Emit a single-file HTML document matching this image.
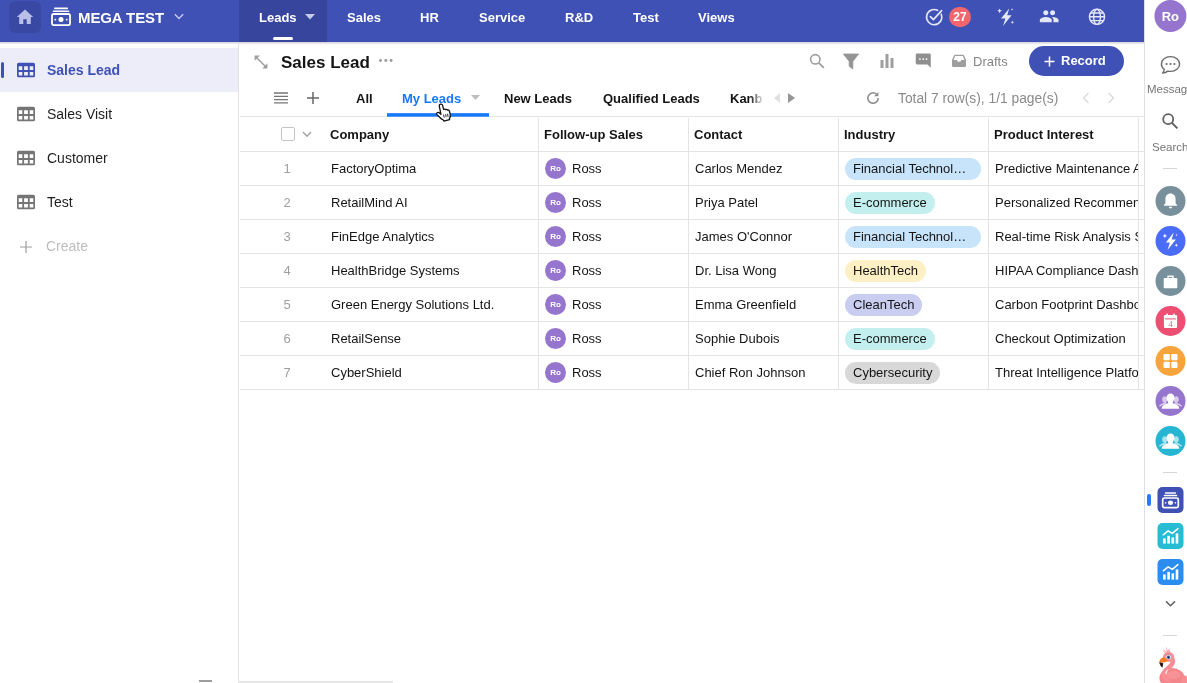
<!DOCTYPE html>
<html lang="en">
<head>
<meta charset="utf-8">
<title>Sales Lead - MEGA TEST</title>
<style>
*{box-sizing:border-box;margin:0;padding:0}
html,body{width:1187px;height:683px;overflow:hidden;background:#fff}
body{font-family:"Liberation Sans",sans-serif;font-size:13px;color:#151515;position:relative}
#app{position:absolute;left:0;top:0;width:1187px;height:683px;will-change:transform}
.abs{position:absolute}
svg{display:block}

/* top header */
#hdr{position:absolute;left:0;top:0;width:1144px;height:42px;background:#3f51b5}
#hdrshadow{position:absolute;left:0;top:42px;width:1144px;height:3px;background:linear-gradient(#d0d1d8,#ebebee 55%,rgba(255,255,255,0))}
#home{position:absolute;left:9px;top:1px;width:32px;height:32px;border-radius:6px;background:#3949a3}
#appname{position:absolute;left:78px;top:9px;font-size:15px;font-weight:bold;color:#fff;line-height:18px;white-space:nowrap;letter-spacing:-0.1px}
#tabact{position:absolute;left:239px;top:0;width:88px;height:42px;background:#37459d}
.nt{position:absolute;top:10px;font-size:13px;font-weight:bold;color:#fff;line-height:16px;white-space:nowrap}
#ntbar{position:absolute;left:273px;top:37px;width:20px;height:3px;border-radius:2px;background:#fff}
#badge{position:absolute;left:949px;top:7px;width:22px;height:20px;border-radius:10px;background:#f1666d;color:#fff;font-size:12px;font-weight:bold;line-height:20px;text-align:center}

/* left sidebar */
#side{position:absolute;left:0;top:44px;width:239px;height:639px;background:#fff;border-right:1px solid #e3e3e3}
#sel{position:absolute;left:0;top:48px;width:238px;height:44px;background:#ecedf8}
#selbar{position:absolute;left:1px;top:62px;width:3px;height:16px;border-radius:2px;background:#3f51b5}
.si{position:absolute;left:47px;font-size:14px;line-height:18px;color:#1f1f1f;white-space:nowrap}
.gi{position:absolute;left:17px}

/* main */
#title{position:absolute;left:281px;top:52px;font-size:17px;font-weight:bold;line-height:22px;color:#151515;white-space:nowrap}
.vt{position:absolute;top:91px;font-size:13px;font-weight:bold;line-height:16px;color:#151515;white-space:nowrap}
#vtbar{position:absolute;left:387px;top:113px;width:102px;height:4px;background:linear-gradient(to bottom,rgba(22,119,255,.85) 0,rgba(22,119,255,.85) 1px,#1677ff 1px,#1677ff 3px,rgba(22,119,255,.7) 3px,rgba(22,119,255,.7) 4px);z-index:2}
#drafts{position:absolute;left:973px;top:54px;font-size:13px;line-height:16px;color:#858585}
#rec{position:absolute;left:1029px;top:46px;width:95px;height:30px;border-radius:15px;background:#3f51b5;color:#fff;font-size:13px;font-weight:bold;line-height:30px}
#total{position:absolute;left:898px;top:91px;font-size:13.800px;line-height:16px;color:#8a8a8a;white-space:nowrap}

/* table */
#tbl{position:absolute;left:239px;top:117px;width:905px;height:273px}
.hl{position:absolute;left:1px;width:904px;height:1px;background:#e4e4e4}
.vl{position:absolute;top:1px;width:1px;height:271px;background:#e4e4e4}
.th{position:absolute;top:10px;font-size:13px;font-weight:bold;line-height:16px;color:#151515;white-space:nowrap}
.row{position:absolute;left:0;width:905px;height:34px}
.c{position:absolute;top:10px;line-height:16px;font-size:13px;color:#151515;white-space:nowrap}
.n{left:43px;width:10px;text-align:center;color:#9e9e9e}
.co{left:92px}
.av{position:absolute;left:306px;top:7px;width:21px;height:21px;border-radius:11px;background:#9575cd;color:#fff;font-size:8px;font-weight:bold;line-height:21px;text-align:center}
.ro{left:333px}
.ct{left:456px}
.tag{position:absolute;left:606px;top:7px;height:22px;border-radius:11px;padding:0 8px;line-height:22px;font-size:13px;color:#151515;white-space:nowrap}
.pi{left:756px;width:143px;overflow:hidden}

/* right rail */
#rail{position:absolute;left:1144px;top:0;width:43px;height:683px;background:#fff;border-left:1px solid #e0e0e0}
.rl{position:absolute;font-size:11.5px;color:#757575;line-height:14px;white-space:nowrap}
.rc{position:absolute;left:1155px;transform:translateX(0.5px);width:30px;height:30px;border-radius:15px;overflow:hidden}
.rs{position:absolute;left:1158px;transform:translateX(-0.5px);width:26px;height:26px;border-radius:5px;overflow:hidden}
.sep{position:absolute;left:1163px;width:14px;height:1px;background:#d6d6d6}
</style>
</head>
<body>
<div id="app">

<!-- ===== header ===== -->
<div id="hdr"></div>
<div id="hdrshadow"></div>
<div id="home"><svg width="32" height="32" viewBox="0 0 32 32"><path d="M16 8.600 L7.800 16 H10.200 V23 H14.300 V18.200 H17.700 V23 H21.800 V16 H24.200 Z" fill="#b9bfe6"/></svg></div>
<svg class="abs" style="left:51px;top:7px" width="20" height="20" viewBox="0 0 20 20"><rect x="3" y="0.6" width="14" height="1.6" rx=".8" fill="#fff"/><rect x="1.6" y="3.4" width="16.8" height="1.7" rx=".8" fill="#fff"/><rect x="1" y="7" width="18" height="11.2" rx="1.6" fill="none" stroke="#fff" stroke-width="1.8"/><circle cx="10" cy="12.6" r="2.5" fill="#fff"/><rect x="3.5" y="11.8" width="1.6" height="1.6" fill="#fff"/><rect x="14.9" y="11.8" width="1.6" height="1.6" fill="#fff"/></svg>
<div id="appname">MEGA TEST</div>
<svg class="abs" style="left:173px;top:12px" width="12" height="9" viewBox="0 0 12 9"><path d="M1.8 2.2 L6 6.4 L10.2 2.2" fill="none" stroke="#c5cbec" stroke-width="1.4"/></svg>

<div id="tabact"></div>
<div class="nt" style="left:259px">Leads</div>
<svg class="abs" style="left:305px;top:14px" width="10" height="6" viewBox="0 0 10 6"><path d="M0 0 H10 L5 5.4 Z" fill="#c5cbec"/></svg>
<div id="ntbar"></div>
<div class="nt" style="left:347px">Sales</div>
<div class="nt" style="left:420px">HR</div>
<div class="nt" style="left:479px">Service</div>
<div class="nt" style="left:565px">R&amp;D</div>
<div class="nt" style="left:633px">Test</div>
<div class="nt" style="left:698px">Views</div>

<!-- header right icons -->
<svg class="abs" style="left:924px;top:7px" width="20" height="20" viewBox="0 0 20 20"><path d="M17.2 7.2 A7.6 7.6 0 1 1 13.6 3.3" fill="none" stroke="#e4e7f7" stroke-width="1.6" stroke-linecap="round"/><path d="M6.4 9.6 L9.4 12.6 L17.6 3.6" fill="none" stroke="#e4e7f7" stroke-width="1.7" stroke-linecap="round" stroke-linejoin="round"/></svg>
<div id="badge">27</div>
<svg class="abs" style="left:995px;top:6px" width="22" height="22" viewBox="0 0 22 22"><path d="M14.200 2.400 L6 12.400 H10.400 L8 20 L16.600 9.200 H12.200 Z" fill="#e4e7f7"/><path d="M4.6 2.4 l.7 1.7 1.7.7 -1.7.7 -.7 1.7 -.7-1.7 -1.7-.7 1.7-.7z" fill="#e4e7f7"/><path d="M17.4 14.6 l.5 1.2 1.2.5 -1.2.5 -.5 1.2 -.5-1.2 -1.2-.5 1.2-.5z" fill="#e4e7f7"/><path d="M17 2.2 l.35.85.85.35-.85.35-.35.85-.35-.85-.85-.35.85-.35z" fill="#e4e7f7"/></svg>
<svg class="abs" style="left:1038.800px;top:6px" width="20.400" height="20.400" viewBox="0 0 24 24"><path d="M16 11c1.66 0 2.99-1.34 2.99-3S17.660 5 16 5c-1.660 0-3 1.340-3 3s1.340 3 3 3zm-8 0c1.660 0 2.990-1.340 2.990-3S9.660 5 8 5C6.340 5 5 6.340 5 8s1.340 3 3 3zm0 2c-2.330 0-7 1.170-7 3.500V19h14v-2.500c0-2.330-4.670-3.500-7-3.500zm8 0c-.290 0-.620.020-.970.050 1.160.840 1.970 1.970 1.970 3.450V19h6v-2.500c0-2.330-4.670-3.500-7-3.500z" fill="#e4e7f7"/></svg>
<svg class="abs" style="left:1087px;top:7px" width="20" height="20" viewBox="0 0 20 20"><g fill="none" stroke="#e4e7f7" stroke-width="1.400"><circle cx="10" cy="9.800" r="7.600"/><ellipse cx="10" cy="9.800" rx="3.400" ry="7.600"/><path d="M2.400 9.800 H17.600 M3.400 6 H16.600 M3.400 13.600 H16.600"/></g></svg>

<!-- ===== left sidebar ===== -->
<div id="side"></div>
<div id="sel"></div>
<div id="selbar"></div>
<svg class="gi" style="top:62px" width="18" height="16" viewBox="0 0 18 16"><path fill="#3f51b5" fill-rule="evenodd" d="M1.600 0.700 H16.400 A1.600 1.600 0 0 1 18 2.300 V13.700 A1.600 1.600 0 0 1 16.400 15.300 H1.600 A1.600 1.600 0 0 1 0 13.700 V2.300 A1.600 1.600 0 0 1 1.600 0.700 Z M1.700 4.300 V7.900 H5.300 V4.300 Z M7.100 4.300 V7.900 H10.900 V4.300 Z M12.700 4.300 V7.900 H16.300 V4.300 Z M1.700 9.900 V13.500 H5.300 V9.900 Z M7.100 9.900 V13.500 H10.900 V9.900 Z M12.700 9.900 V13.500 H16.300 V9.900 Z"/></svg>
<div class="si" style="top:61px;font-weight:bold;color:#3f51b5">Sales Lead</div>
<svg class="gi" style="top:106px" width="18" height="16" viewBox="0 0 18 16"><path fill="#757575" fill-rule="evenodd" d="M1.600 0.700 H16.400 A1.600 1.600 0 0 1 18 2.300 V13.700 A1.600 1.600 0 0 1 16.400 15.300 H1.600 A1.600 1.600 0 0 1 0 13.700 V2.300 A1.600 1.600 0 0 1 1.600 0.700 Z M1.700 4.300 V7.900 H5.300 V4.300 Z M7.100 4.300 V7.900 H10.900 V4.300 Z M12.700 4.300 V7.900 H16.300 V4.300 Z M1.700 9.900 V13.500 H5.300 V9.900 Z M7.100 9.900 V13.500 H10.900 V9.900 Z M12.700 9.900 V13.500 H16.300 V9.900 Z"/></svg>
<div class="si" style="top:105px">Sales Visit</div>
<svg class="gi" style="top:150px" width="18" height="16" viewBox="0 0 18 16"><path fill="#757575" fill-rule="evenodd" d="M1.600 0.700 H16.400 A1.600 1.600 0 0 1 18 2.300 V13.700 A1.600 1.600 0 0 1 16.400 15.300 H1.600 A1.600 1.600 0 0 1 0 13.700 V2.300 A1.600 1.600 0 0 1 1.600 0.700 Z M1.700 4.300 V7.900 H5.300 V4.300 Z M7.100 4.300 V7.900 H10.900 V4.300 Z M12.700 4.300 V7.900 H16.300 V4.300 Z M1.700 9.900 V13.500 H5.300 V9.900 Z M7.100 9.900 V13.500 H10.900 V9.900 Z M12.700 9.900 V13.500 H16.300 V9.900 Z"/></svg>
<div class="si" style="top:149px">Customer</div>
<svg class="gi" style="top:194px" width="18" height="16" viewBox="0 0 18 16"><path fill="#757575" fill-rule="evenodd" d="M1.600 0.700 H16.400 A1.600 1.600 0 0 1 18 2.300 V13.700 A1.600 1.600 0 0 1 16.400 15.300 H1.600 A1.600 1.600 0 0 1 0 13.700 V2.300 A1.600 1.600 0 0 1 1.600 0.700 Z M1.700 4.300 V7.900 H5.300 V4.300 Z M7.100 4.300 V7.900 H10.900 V4.300 Z M12.700 4.300 V7.900 H16.300 V4.300 Z M1.700 9.900 V13.500 H5.300 V9.900 Z M7.100 9.900 V13.500 H10.900 V9.900 Z M12.700 9.900 V13.500 H16.300 V9.900 Z"/></svg>
<div class="si" style="top:193px">Test</div>
<svg class="abs" style="left:19px;top:240px" width="14" height="14" viewBox="0 0 14 14"><path d="M7 1 V13 M1 7 H13" stroke="#9e9e9e" stroke-width="1.2" fill="none"/></svg>
<div class="si" style="top:237px;left:46px;color:#bdbdbd">Create</div>

<!-- ===== title row ===== -->
<svg class="abs" style="left:254px;top:55px" width="14" height="14" viewBox="0 0 14 14"><path d="M2.500 2.500 L11.500 11.500" fill="none" stroke="#9e9e9e" stroke-width="1.500"/><path d="M0.600 0.600 H5.800 L0.600 5.800 Z M13.400 13.400 H8.200 L13.400 8.200 Z" fill="#9e9e9e"/></svg>
<div id="title">Sales Lead</div>
<svg class="abs" style="left:378px;top:58px" width="16" height="5" viewBox="0 0 16 5"><circle cx="2.500" cy="2.500" r="1.450" fill="#9a9a9a"/><circle cx="7.800" cy="2.500" r="1.450" fill="#9a9a9a"/><circle cx="13.100" cy="2.500" r="1.450" fill="#9a9a9a"/></svg>

<svg class="abs" style="left:808px;top:52px" width="18" height="18" viewBox="0 0 18 18"><circle cx="7.300" cy="7.300" r="4.700" fill="none" stroke="#9e9e9e" stroke-width="1.600"/><path d="M10.800 10.800 L15.800 15.800" stroke="#9e9e9e" stroke-width="1.800" fill="none"/></svg>
<svg class="abs" style="left:842px;top:53px" width="18" height="17" viewBox="0 0 18 17"><path d="M1.400 1 H16.600 L10.800 8.400 V16 L7.200 13.200 V8.400 Z" fill="#949494" stroke="#949494" stroke-width=".8" stroke-linejoin="round"/></svg>
<svg class="abs" style="left:879px;top:53px" width="16" height="16" viewBox="0 0 16 16"><rect x="1.500" y="7" width="3" height="8" fill="#9e9e9e"/><rect x="6.500" y="1" width="3" height="14" fill="#9e9e9e"/><rect x="11.500" y="5" width="3" height="10" fill="#9e9e9e"/></svg>
<svg class="abs" style="left:915px;top:53px" width="16.500" height="15.600" viewBox="0 0 18 17"><path d="M2.400 0.500 H15.600 A1.600 1.600 0 0 1 17.200 2.100 V16.200 L13.600 12.600 H2.400 A1.600 1.600 0 0 1 0.800 11 V2.100 A1.600 1.600 0 0 1 2.400 0.500 Z" fill="#8f8f8f"/><circle cx="5.400" cy="6.600" r="1" fill="#fff"/><circle cx="9" cy="6.600" r="1" fill="#fff"/><circle cx="12.600" cy="6.600" r="1" fill="#fff"/></svg>
<svg class="abs" style="left:951px;top:54px" width="16" height="14" viewBox="0 0 16 14"><path d="M3.400 0.700 H12.600 L15 5.800 V11.800 A1.100 1.100 0 0 1 13.900 12.900 H2.100 A1.100 1.100 0 0 1 1 11.800 V5.800 Z M4.200 2.100 L2.600 6 H5.700 A2.350 2.350 0 0 0 10.300 6 H13.400 L11.800 2.100 Z" fill="#9e9e9e" fill-rule="evenodd"/></svg>
<div id="drafts">Drafts</div>
<div id="rec"><svg class="abs" style="left:15px;top:9.500px" width="11" height="11" viewBox="0 0 11 11"><path d="M5.500 0.500 V10.500 M0.500 5.500 H10.500" stroke="#fff" stroke-width="1.500" fill="none"/></svg><span class="abs" style="left:32px;top:0">Record</span></div>

<!-- ===== view tabs row ===== -->
<svg class="abs" style="left:274px;top:92px" width="14" height="12" viewBox="0 0 14 12"><path d="M0 1 H14 M0 4.300 H14 M0 7.600 H14 M0 10.900 H14" stroke="#757575" stroke-width="1.300" fill="none"/></svg>
<svg class="abs" style="left:306px;top:91px" width="14" height="14" viewBox="0 0 14 14"><path d="M7 1 V13 M1 7 H13" stroke="#666" stroke-width="1.500" fill="none"/></svg>
<div class="vt" style="left:356px">All</div>
<div class="vt" style="left:402px;color:#1677ff">My Leads</div>
<svg class="abs" style="left:471px;top:95px" width="9" height="5" viewBox="0 0 9 5"><path d="M0 0 H9 L4.500 5 Z" fill="#bdbdbd"/></svg>
<div id="vtbar"></div>
<div class="vt" style="left:504px">New Leads</div>
<div class="vt" style="left:603px">Qualified Leads</div>
<div class="vt" style="left:730px;width:33px;overflow:hidden">Kanban</div>
<div class="abs" style="left:750px;top:88px;width:14px;height:20px;background:linear-gradient(90deg,rgba(255,255,255,0),#fff)"></div>
<svg class="abs" style="left:774px;top:93px" width="6" height="10" viewBox="0 0 6 10"><path d="M6 0 V10 L0 5 Z" fill="#e0e0e0"/></svg>
<svg class="abs" style="left:788px;top:93px" width="7" height="10" viewBox="0 0 7 10"><path d="M0 0 V10 L7 5 Z" fill="#969696"/></svg>
<svg class="abs" style="left:865px;top:90px" width="16" height="16" viewBox="0 0 16 16"><path d="M13.200 8 A5.200 5.200 0 1 1 11.600 4.300" fill="none" stroke="#8a8a8a" stroke-width="1.500"/><path d="M13.400 2 V6.200 H9.200 Z" fill="#8a8a8a"/></svg>
<div id="total">Total 7 row(s), 1/1 page(s)</div>
<svg class="abs" style="left:1082px;top:92px" width="8" height="12" viewBox="0 0 8 12"><path d="M6.500 1 L1.500 6 L6.500 11" fill="none" stroke="#d9d9d9" stroke-width="1.300"/></svg>
<svg class="abs" style="left:1107px;top:92px" width="8" height="12" viewBox="0 0 8 12"><path d="M1.500 1 L6.500 6 L1.500 11" fill="none" stroke="#d9d9d9" stroke-width="1.300"/></svg>

<!-- ===== table ===== -->
<div id="tbl">
  <div class="hl" style="top:-1px"></div>
  <div class="hl" style="top:34px"></div>
  <div class="hl" style="top:68px"></div>
  <div class="hl" style="top:102px"></div>
  <div class="hl" style="top:136px"></div>
  <div class="hl" style="top:170px"></div>
  <div class="hl" style="top:204px"></div>
  <div class="hl" style="top:238px"></div>
  <div class="hl" style="top:272px"></div>
  <div class="vl" style="left:299px"></div>
  <div class="vl" style="left:449px"></div>
  <div class="vl" style="left:599px"></div>
  <div class="vl" style="left:749px"></div>
  <div class="vl" style="left:899px"></div>

  <div class="abs" style="left:42px;top:10px;width:14px;height:14px;border:1px solid #c4c4c4;border-radius:2px;background:#fff"></div>
  <svg class="abs" style="left:63px;top:14px" width="10" height="7" viewBox="0 0 10 7"><path d="M1 1 L5 5.200 L9 1" fill="none" stroke="#9e9e9e" stroke-width="1.300"/></svg>
  <div class="th" style="left:91px">Company</div>
  <div class="th" style="left:305px">Follow-up Sales</div>
  <div class="th" style="left:455px">Contact</div>
  <div class="th" style="left:605px">Industry</div>
  <div class="th" style="left:755px">Product Interest</div>

  <div class="row" style="top:34px"><div class="c n">1</div><div class="c co">FactoryOptima</div><div class="av">Ro</div><div class="c ro">Ross</div><div class="c ct">Carlos Mendez</div><div class="tag" style="background:#c8e4fb;width:136px">Financial Technol…</div><div class="c pi">Predictive Maintenance Analytics</div></div>
  <div class="row" style="top:68px"><div class="c n">2</div><div class="c co">RetailMind AI</div><div class="av">Ro</div><div class="c ro">Ross</div><div class="c ct">Priya Patel</div><div class="tag" style="background:#c3f0ee">E-commerce</div><div class="c pi">Personalized Recommendation</div></div>
  <div class="row" style="top:102px"><div class="c n">3</div><div class="c co">FinEdge Analytics</div><div class="av">Ro</div><div class="c ro">Ross</div><div class="c ct">James O'Connor</div><div class="tag" style="background:#c8e4fb;width:136px">Financial Technol…</div><div class="c pi">Real-time Risk Analysis Suite</div></div>
  <div class="row" style="top:136px"><div class="c n">4</div><div class="c co">HealthBridge Systems</div><div class="av">Ro</div><div class="c ro">Ross</div><div class="c ct">Dr. Lisa Wong</div><div class="tag" style="background:#fdf0c4">HealthTech</div><div class="c pi">HIPAA Compliance Dashboard</div></div>
  <div class="row" style="top:170px"><div class="c n">5</div><div class="c co">Green Energy Solutions Ltd.</div><div class="av">Ro</div><div class="c ro">Ross</div><div class="c ct">Emma Greenfield</div><div class="tag" style="background:#c9cdf0">CleanTech</div><div class="c pi">Carbon Footprint Dashboard</div></div>
  <div class="row" style="top:204px"><div class="c n">6</div><div class="c co">RetailSense</div><div class="av">Ro</div><div class="c ro">Ross</div><div class="c ct">Sophie Dubois</div><div class="tag" style="background:#c3f0ee">E-commerce</div><div class="c pi">Checkout Optimization</div></div>
  <div class="row" style="top:238px"><div class="c n">7</div><div class="c co">CyberShield</div><div class="av">Ro</div><div class="c ro">Ross</div><div class="c ct">Chief Ron Johnson</div><div class="tag" style="background:#d8d8d8">Cybersecurity</div><div class="c pi">Threat Intelligence Platform</div></div>
</div>

<!-- ===== right rail ===== -->
<div id="rail"></div>
<div class="abs" style="left:1155px;top:0;width:32px;height:32px;border-radius:16px;transform:translateX(-0.600px);background:#9575cd;color:#fff;font-size:13px;font-weight:bold;line-height:33px;text-align:center">Ro</div>

<svg class="abs" style="left:1160px;top:55px" width="21" height="20" viewBox="0 0 21 20"><path d="M10.500 1.600 C5.400 1.600 1.400 4.900 1.400 9 C1.400 11.100 2.500 13 4.300 14.300 C4.200 15.700 3.600 17 2.600 18 C4.700 17.900 6.500 17.200 7.800 16.100 C8.700 16.300 9.600 16.400 10.500 16.400 C15.600 16.400 19.600 13.100 19.600 9 C19.600 4.900 15.600 1.600 10.500 1.600 Z" fill="none" stroke="#6b6b6b" stroke-width="1.400" stroke-linejoin="round"/><circle cx="6.600" cy="9" r="1.100" fill="#6b6b6b"/><circle cx="10.500" cy="9" r="1.100" fill="#6b6b6b"/><circle cx="14.400" cy="9" r="1.100" fill="#6b6b6b"/></svg>
<div class="rl" style="left:1147px;top:82px">Message</div>
<svg class="abs" style="left:1161px;top:112px" width="18" height="18" viewBox="0 0 18 18"><circle cx="7.200" cy="7.200" r="5" fill="none" stroke="#616161" stroke-width="1.800"/><path d="M10.900 10.900 L16.400 16.400" stroke="#616161" stroke-width="2" fill="none"/></svg>
<div class="rl" style="left:1152px;top:140px">Search</div>
<div class="sep" style="top:168px"></div>

<!-- bell -->
<div class="rc" style="top:186px;background:#78909c"><svg width="30" height="30" viewBox="0 0 30 30"><path d="M15 7.600 C11.900 7.600 9.900 10 9.900 13 V17.200 L8.400 19 V19.800 H21.600 V19 L20.100 17.200 V13 C20.100 10 18.100 7.600 15 7.600 Z" fill="#fff"/><path d="M13.300 20.800 H16.700 A1.700 1.700 0 0 1 13.300 20.800 Z" fill="#fff"/></svg></div>
<!-- spark -->
<div class="rc" style="top:226px;background:#4a6cf7"><svg width="30" height="30" viewBox="0 0 30 30"><path d="M18.200 6.400 L10.400 16.400 H14.400 L12 24 L20.400 13.400 H16.200 Z" fill="#fff"/><path d="M9.400 7.600 l.7 1.600 1.600.7 -1.600.7 -.7 1.600 -.7-1.600 -1.600-.7 1.600-.7z" fill="#fff"/><path d="M20.800 17.400 l.55 1.250 1.250.55 -1.250.55 -.55 1.250 -.55-1.250 -1.250-.55 1.250-.55z" fill="#fff"/><path d="M21.200 7.800 l.35.850.85.350-.85.350-.35.850-.35-.850-.85-.350.85-.350z" fill="#fff"/></svg></div>
<!-- briefcase -->
<div class="rc" style="top:266px;background:#78909c"><svg width="30" height="30" viewBox="0 0 30 30"><path d="M12.600 12 V10.200 H17.400 V12" fill="none" stroke="#fff" stroke-width="1.500"/><rect x="8.200" y="12" width="13.600" height="10.200" rx="1" fill="#fff"/></svg></div>
<!-- calendar -->
<div class="rc" style="top:306px;background:#ec4f72"><svg width="30" height="30" viewBox="0 0 30 30"><rect x="8.400" y="9" width="13.200" height="13" rx="1.200" fill="#fff"/><rect x="10.800" y="7.600" width="1.600" height="3" fill="#fff"/><rect x="17.600" y="7.600" width="1.600" height="3" fill="#fff"/><rect x="9.600" y="12.400" width="10.800" height="1" fill="#ec4f72"/><text x="15" y="20.600" font-family="Liberation Serif, serif" font-size="8" text-anchor="middle" fill="#ec4f72">4</text></svg></div>
<!-- grid -->
<div class="rc" style="top:346px;background:#f7a43d"><svg width="30" height="30" viewBox="0 0 30 30"><rect x="8" y="8" width="6.300" height="6.300" rx="1" fill="#fff"/><rect x="15.700" y="8" width="6.300" height="6.300" rx="1" fill="#fff"/><rect x="8" y="15.700" width="6.300" height="6.300" rx="1" fill="#fff"/><rect x="15.700" y="15.700" width="6.300" height="6.300" rx="1" fill="#fff"/></svg></div>
<!-- people purple -->
<div class="rc" style="top:386px;background:#9575cd"><svg width="30" height="30" viewBox="0 0 30 30"><g fill="#fff" opacity=".62"><ellipse cx="9.200" cy="13.400" rx="2.500" ry="3.100"/><path d="M9.800 15.800 C8.200 17.600 5 17.600 3.500 19.700 L4.300 20.700 C6 19.300 9.400 18.800 11.400 17.600 Z"/><ellipse cx="20.800" cy="13.400" rx="2.500" ry="3.100"/><path d="M20.200 15.800 C21.800 17.600 25 17.600 26.500 19.700 L25.700 20.700 C24 19.300 20.600 18.800 18.600 17.600 Z"/></g><g fill="#fff"><ellipse cx="15" cy="12" rx="4" ry="4.500"/><path d="M12.700 15.400 V17.300 C10.200 18.200 6.500 18.600 6.200 22.800 H23.800 C23.500 18.600 19.800 18.200 17.300 17.300 V15.400 Z"/></g></svg></div>
<!-- people teal -->
<div class="rc" style="top:426px;background:#26b6d4"><svg width="30" height="30" viewBox="0 0 30 30"><g fill="#fff" opacity=".62"><ellipse cx="9.200" cy="13.400" rx="2.500" ry="3.100"/><path d="M9.800 15.800 C8.200 17.600 5 17.600 3.500 19.700 L4.300 20.700 C6 19.300 9.400 18.800 11.400 17.600 Z"/><ellipse cx="20.800" cy="13.400" rx="2.500" ry="3.100"/><path d="M20.200 15.800 C21.800 17.600 25 17.600 26.500 19.700 L25.700 20.700 C24 19.300 20.600 18.800 18.600 17.600 Z"/></g><g fill="#fff"><ellipse cx="15" cy="12" rx="4" ry="4.500"/><path d="M12.700 15.400 V17.300 C10.200 18.200 6.500 18.600 6.200 22.800 H23.800 C23.500 18.600 19.800 18.200 17.300 17.300 V15.400 Z"/></g></svg></div>
<div class="sep" style="top:472px"></div>

<div class="abs" style="left:1147px;top:494px;width:4px;height:12px;border-radius:2px;background:#2979ff"></div>
<!-- app squares -->
<div class="rs" style="top:487px;background:#3f51b5"><svg width="26" height="26" viewBox="0 0 26 26"><rect x="7.400" y="5.200" width="11.200" height="1.500" rx=".7" fill="#fff"/><rect x="6.200" y="7.800" width="13.600" height="1.500" rx=".7" fill="#fff"/><rect x="5.200" y="11" width="15.600" height="9.600" rx="1.600" fill="none" stroke="#fff" stroke-width="1.700"/><ellipse cx="13" cy="15.800" rx="2.600" ry="2.200" fill="#fff"/><rect x="7.400" y="15.100" width="1.400" height="1.400" fill="#fff"/><rect x="17.200" y="15.100" width="1.400" height="1.400" fill="#fff"/></svg></div>
<div class="rs" style="top:523px;background:#26bcd3"><svg width="26" height="26" viewBox="0 0 26 26"><g fill="#fff"><rect x="5.600" y="15.400" width="2.600" height="5.200"/><rect x="9.800" y="12.800" width="2.600" height="7.800"/><rect x="14" y="14.400" width="2.600" height="6.200"/><rect x="18.200" y="10.400" width="2.600" height="10.200"/></g><path d="M5.800 11.800 L10.600 7.800 L14.800 10.400 L20.400 5.600" fill="none" stroke="#fff" stroke-width="1.500" stroke-linejoin="round" stroke-linecap="round"/></svg></div>
<div class="rs" style="top:559px;background:#2b8def"><svg width="26" height="26" viewBox="0 0 26 26"><g fill="#fff"><rect x="5.600" y="15.400" width="2.600" height="5.200"/><rect x="9.800" y="12.800" width="2.600" height="7.800"/><rect x="14" y="14.400" width="2.600" height="6.200"/><rect x="18.200" y="10.400" width="2.600" height="10.200"/></g><path d="M5.800 11.800 L10.600 7.800 L14.800 10.400 L20.400 5.600" fill="none" stroke="#fff" stroke-width="1.500" stroke-linejoin="round" stroke-linecap="round"/></svg></div>
<svg class="abs" style="left:1165px;top:600px" width="11" height="8" viewBox="0 0 11 8"><path d="M1 1.400 L5.500 5.800 L10 1.400" fill="none" stroke="#616161" stroke-width="1.500"/></svg>
<div class="sep" style="top:635px"></div>

<!-- flamingo mascot -->
<svg class="abs" style="left:1147px;top:640px" width="40" height="43" viewBox="0 0 40 43">
  <path d="M19.600 12.400 L16.600 9.600 M20.200 12 L19.400 7.400 M21 12.200 L22.400 8.600 M18.600 12.600 L16 11" stroke="#f9b3b8" stroke-width=".9" fill="none"/>
  <circle cx="21.400" cy="11.600" r="1.800" fill="#f9aeb3"/>
  <ellipse cx="25" cy="38" rx="12.600" ry="10" fill="#f4868b"/>
  <ellipse cx="26.500" cy="35" rx="7" ry="4" fill="#f8a3a6" opacity=".45"/>
  <ellipse cx="37.600" cy="40.400" rx="3.400" ry="4.800" fill="#f58d92"/>
  <path d="M25.200 18.600 C27.600 24 22.400 27 19 30 C15.400 33.200 16.400 37.400 20.600 39.400" fill="none" stroke="#f68e93" stroke-width="4.600" stroke-linecap="round"/>
  <path d="M18.600 34 C18 31.800 19.600 30.200 21.600 29 C20.400 30.800 19.600 32.200 19.400 34.400 Z" fill="#fff"/>
  <ellipse cx="21.600" cy="17" rx="5.700" ry="5.100" fill="#f79398"/>
  <path d="M17.400 17.400 C14.800 17.200 12.600 19.200 12.300 22 C14.800 22.800 18.800 22.800 20.800 20.400 Z" fill="#f57c1f"/>
  <path d="M12.300 22 L16.200 23.200 L15.600 27.600 C13.600 26.600 12.500 24.400 12.300 22 Z" fill="#2a1a14"/>
  <ellipse cx="21.600" cy="17" rx="2.500" ry="2.200" fill="#fff"/>
  <ellipse cx="21.500" cy="17.300" rx="1.800" ry="1.700" fill="#3b7fc4"/>
  <circle cx="21.500" cy="17.400" r=".9" fill="#14202e"/>
  <path d="M19.200 15.400 C20.400 14.600 22.600 14.600 23.800 15.400" stroke="#5b6a7a" stroke-width=".5" fill="none"/>
</svg>

<!-- hand cursor -->
<svg class="abs" style="left:435px;top:103px;z-index:3" width="17" height="19" viewBox="0 0 17 19">
  <path d="M5.400 1.200 C6.300 .8 7.200 1.300 7.500 2.200 L8.600 6.400 C9.100 5.900 10 5.900 10.500 6.600 C11.100 6.100 12.100 6.300 12.500 7.100 C13.200 6.800 14.100 7.200 14.400 8.100 L15.200 11.200 C15.600 13 15.300 14.300 14.400 15.600 L14.600 16.600 L8.800 18.100 L8.400 17 C7.200 16.600 5.800 15.400 4.600 14.200 L2 11.600 C1.300 10.800 1.700 9.800 2.500 9.500 C3.300 9.200 4.100 9.600 4.800 10.200 L5.900 11.200 L4.300 3.200 C4.100 2.300 4.600 1.500 5.400 1.200 Z" fill="#fff" stroke="#111" stroke-width="1.300" stroke-linejoin="round"/>
  <path d="M8.600 11.600 L9.200 14.600 M10.600 11.200 L11.200 14.200 M12.500 10.800 L13.100 13.800" stroke="#111" stroke-width=".9" fill="none"/>
</svg>

<!-- bottom cut-off bits -->
<div class="abs" style="left:199px;top:680px;width:13px;height:2px;background:#9e9e9e"></div>
<div class="abs" style="left:239px;top:681px;width:154px;height:2px;background:#e6e6e6"></div>

</div>
</body>
</html>
